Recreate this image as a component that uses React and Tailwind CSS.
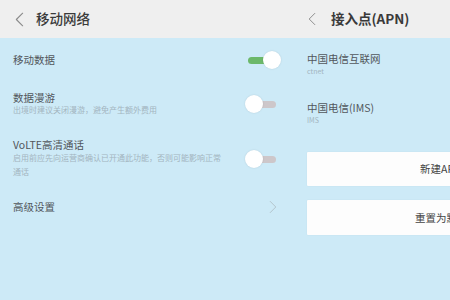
import React from "react";

const font = { fontFamily: '"Noto Sans CJK SC", "Noto Sans", sans-serif' };

function Chevron({ className }) {
  return (
    <svg className={className} viewBox="0 0 10 16" fill="none">
      <path d="M8.5 1 L1.5 8 L8.5 15" stroke="currentColor" strokeWidth="1.2" strokeLinecap="round" strokeLinejoin="round" />
    </svg>
  );
}

function Toggle({ on }) {
  return (
    <div className="relative w-[36px] h-[18px] shrink-0">
      <div className={`absolute left-[3px] top-[6px] w-[28px] h-[7px] rounded-full ${on ? "bg-[#6cb86a]" : "bg-[#cdc7ca]"}`} />
      <div className={`absolute top-0 w-[18px] h-[18px] rounded-full bg-white shadow-[0_0_2px_rgba(0,0,0,0.12)] ${on ? "left-[18px]" : "left-0"}`} />
    </div>
  );
}

export default function App() {
  return (
    <div className="flex w-[450px] h-[300px] overflow-hidden bg-[#cdeaf7]" style={font}>
      {/* Left screen */}
      <div className="w-[300px] shrink-0 flex flex-col">
        <div className="h-[38px] bg-[#efefef] flex items-center pl-[15px]">
          <Chevron className="w-[9px] h-[15px] text-[#8a8a8a]" />
          <span className="ml-[12px] text-[13.5px] font-medium text-[#3a3a3a] leading-none">移动网络</span>
        </div>
        <div className="flex items-center h-[44px] pl-[13px] pr-[19px]">
          <div className="flex-1 text-[10.5px] leading-[12px] text-[#52575c]">移动数据</div>
          <Toggle on />
        </div>
        <div className="flex items-center h-[44px] pl-[13px] pr-[19px]">
          <div className="flex-1 flex flex-col">
            <div className="text-[10.5px] leading-[12px] text-[#52575c]">数据漫游</div>
            <div className="text-[8px] leading-[12px] text-[#a3b5bf]">出境时建议关闭漫游，避免产生额外费用</div>
          </div>
          <Toggle />
        </div>
        <div className="flex items-center h-[66px] pl-[13px] pr-[19px]">
          <div className="flex-1 flex flex-col">
            <div className="text-[10.5px] leading-[12px] text-[#52575c]">VoLTE高清通话</div>
            <div className="w-[212px] text-[8px] leading-[14px] text-[#a3b5bf]">启用前应先向运营商确认已开通此功能，否则可能影响正常通话</div>
          </div>
          <Toggle />
        </div>
        <div className="flex items-center h-[30px] pl-[13px] pr-[23px]">
          <div className="flex-1 text-[10.5px] leading-[12px] text-[#52575c]">高级设置</div>
          <Chevron className="w-[8px] h-[14px] text-[#b3c3cb] rotate-180" />
        </div>
      </div>
      {/* Right screen */}
      <div className="w-[300px] shrink-0 flex flex-col">
        <div className="h-[38px] bg-[#efefef] flex items-center pl-[8px]">
          <Chevron className="w-[8px] h-[14px] text-[#8a8a8a]" />
          <span className="ml-[15px] text-[13.5px] font-bold text-[#3a3a3a] leading-none">接入点(APN)</span>
        </div>
        <div className="px-[7px] pt-[15px] flex flex-col">
          <div className="text-[10.5px] leading-[12px] text-[#52575c]">中国电信互联网</div>
          <div className="mt-[1px] text-[7px] leading-[10px] text-[#a3b5bf]">ctnet</div>
          <div className="mt-[26px] text-[10.5px] leading-[12px] text-[#52575c]">中国电信(IMS)</div>
          <div className="mt-[1px] text-[7px] leading-[10px] text-[#a3b5bf]">IMS</div>
          <div className="mt-[27px] w-[286px] h-[34px] bg-[#fdfdfd] rounded-[1px] shadow-[0_0_2px_rgba(0,0,0,0.06)] flex items-center pl-[113px] text-[10.5px] text-[#444]">新建APN</div>
          <div className="mt-[14px] w-[286px] h-[35px] bg-[#fdfdfd] rounded-[1px] shadow-[0_0_2px_rgba(0,0,0,0.06)] flex items-center pl-[108px] text-[10.5px] text-[#444]">重置为默认设置</div>
        </div>
      </div>
    </div>
  );
}
